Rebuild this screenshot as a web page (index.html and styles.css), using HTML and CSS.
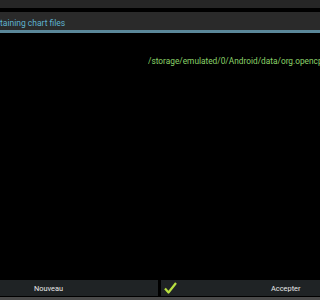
FILE: index.html
```html
<!DOCTYPE html>
<html lang="fr">

<head>
    <meta charset="UTF-8">
    <meta name="viewport" content="width=device-width, initial-scale=1.0">
    <title>Dossier des cartes</title>
    <link rel="stylesheet" href="styles.css">
</head>

<body>
    <div class="screen">
        <div class="topbar"></div>
        <div class="title">
            <span>taining chart files</span>
        </div>
        <div class="content">
            <div class="path">/storage/emulated/0/Android/data/org.opencpn.opencpn/files</div>
        </div>
        <div class="buttons">
            <div class="btn btn-new">Nouveau</div>
            <div class="btn btn-ok">
                <svg class="check" width="13" height="12" viewBox="0 0 13 12">
                    <path d="M1 6.5 L4.5 10.5 L12 1" fill="none" stroke="#b8e040" stroke-width="2.2" stroke-linejoin="round" />
                </svg>
                <span>Accepter</span>
            </div>
        </div>
        <div class="bottombar"></div>
    </div>
</body>

</html>
```

FILE: styles.css
```css
* {
    margin: 0;
    padding: 0;
}

body {
    background: #000;
    font-family: Roboto, "Liberation Sans", sans-serif;
}

.screen {
    width: 320px;
    height: 300px;
    display: flex;
    flex-direction: column;
    overflow: hidden;
}

.topbar {
    height: 8px;
    background: #262626;
    border-bottom: 4px solid #000;
}

.title {
    height: 21px;
    box-sizing: border-box;
    padding-top: 4px;
    background: #2a2a2a;
    border-bottom: 3px solid #5a8799;
    display: flex;
    align-items: center;
    font-size: 8.5px;
    color: #5fb3cf;
    white-space: nowrap;
}

.content {
    flex: 1;
    padding: 23px 0 0 148px;
}

.path {
    font-size: 8.3px;
    color: #8bd46a;
    white-space: nowrap;
    overflow: hidden;
}

.buttons {
    height: 16px;
    display: flex;
    gap: 3px;
    margin-bottom: 1px;
}

.btn {
    background: #1f2325;
    color: #e8e8e8;
    font-size: 7.4px;
    display: flex;
    align-items: center;
}

.btn-new {
    width: 158px;
    padding-left: 34px;
    box-sizing: border-box;
}

.btn-ok {
    flex: 1;
    padding-left: 3px;
}

.check {
    display: block;
}

.btn-ok span {
    margin-left: 94px;
}

.bottombar {
    height: 3px;
    background: #4a4a4a;
}
```
